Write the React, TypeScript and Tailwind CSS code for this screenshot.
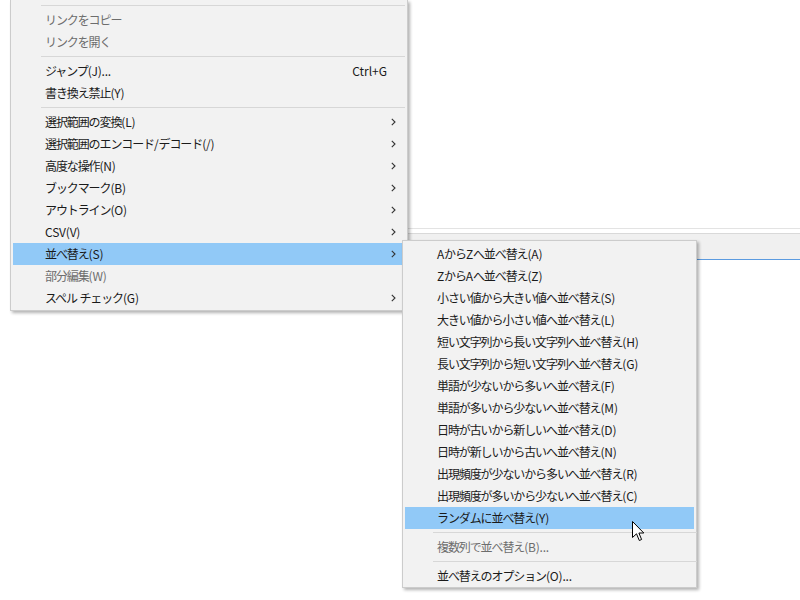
import React from "react";

type Entry =
  | { kind: "sep" }
  | { kind: "item"; label: string; shortcut?: string; sub?: boolean; disabled?: boolean; active?: boolean };

const sep: Entry = { kind: "sep" };

const mainMenu: Entry[] = [
  sep,
  { kind: "item", label: "リンクをコピー", disabled: true },
  { kind: "item", label: "リンクを開く", disabled: true },
  sep,
  { kind: "item", label: "ジャンプ(J)...", shortcut: "Ctrl+G" },
  { kind: "item", label: "書き換え禁止(Y)" },
  sep,
  { kind: "item", label: "選択範囲の変換(L)", sub: true },
  { kind: "item", label: "選択範囲のエンコード/デコード(/)", sub: true },
  { kind: "item", label: "高度な操作(N)", sub: true },
  { kind: "item", label: "ブックマーク(B)", sub: true },
  { kind: "item", label: "アウトライン(O)", sub: true },
  { kind: "item", label: "CSV(V)", sub: true },
  { kind: "item", label: "並べ替え(S)", sub: true, active: true },
  { kind: "item", label: "部分編集(W)", disabled: true },
  { kind: "item", label: "スペル チェック(G)", sub: true },
];

const sortMenu: Entry[] = [
  { kind: "item", label: "AからZへ並べ替え(A)" },
  { kind: "item", label: "ZからAへ並べ替え(Z)" },
  { kind: "item", label: "小さい値から大きい値へ並べ替え(S)" },
  { kind: "item", label: "大きい値から小さい値へ並べ替え(L)" },
  { kind: "item", label: "短い文字列から長い文字列へ並べ替え(H)" },
  { kind: "item", label: "長い文字列から短い文字列へ並べ替え(G)" },
  { kind: "item", label: "単語が少ないから多いへ並べ替え(F)" },
  { kind: "item", label: "単語が多いから少ないへ並べ替え(M)" },
  { kind: "item", label: "日時が古いから新しいへ並べ替え(D)" },
  { kind: "item", label: "日時が新しいから古いへ並べ替え(N)" },
  { kind: "item", label: "出現頻度が少ないから多いへ並べ替え(R)" },
  { kind: "item", label: "出現頻度が多いから少ないへ並べ替え(C)" },
  { kind: "item", label: "ランダムに並べ替え(Y)", active: true },
  sep,
  { kind: "item", label: "複数列で並べ替え(B)...", disabled: true },
  sep,
  { kind: "item", label: "並べ替えのオプション(O)..." },
];

// latin runs keep near-normal spacing, japanese runs are tightened (Meiryo UI kana are narrow)
function Label({ text }: { text: string }) {
  const parts = text.split(/([A-Za-z0-9()/.+ ]+)/).filter(Boolean);
  return (
    <span className="flex-1 whitespace-pre">
      {parts.map((p, i) =>
        /^[A-Za-z0-9()/.+ ]+$/.test(p) ? (
          <span key={i} className="tracking-[-0.2px]">{p}</span>
        ) : (
          <span key={i} className="tracking-[-1.1px]">{p}</span>
        )
      )}
    </span>
  );
}

function Chevron() {
  return (
    <svg width="5" height="8" viewBox="0 0 5 8" className="block">
      <path d="M0.8 0.8 L4 4 L0.8 7.2" fill="none" stroke="#333" strokeWidth="1.1" />
    </svg>
  );
}

function MenuList({ entries }: { entries: Entry[] }) {
  return (
    <>
      {entries.map((e, i) =>
        e.kind === "sep" ? (
          <div key={i} className="h-[7px] pt-[3px] pl-[28px] mr-[-3px]">
            <div className="h-px bg-[#d7d7d7]" />
          </div>
        ) : (
          <div
            key={i}
            className={`flex items-center h-[22px] leading-[22px] pl-[32px] ${
              e.active ? "bg-[#91c9f7]" : ""
            } ${e.disabled ? "text-[#6d6d6d]" : "text-[#1a1a1a]"}`}
          >
            <Label text={e.label} />
            {e.shortcut && <span className="whitespace-nowrap">{e.shortcut}</span>}
            <div className="w-[15px] pl-[4px] flex items-center h-full">{e.sub && <Chevron />}</div>
          </div>
        )
      )}
    </>
  );
}

export default function App() {
  return (
    <div className="relative w-[800px] h-[600px] overflow-hidden bg-white font-['Noto_Sans_CJK_JP','Noto_Sans',sans-serif] text-[12px]">
      {/* window behind the menus */}
      <div className="ml-[300px] flex flex-col">
        <div className="h-[228px]" />
        <div className="h-px bg-[#e3e3e3]" />
        <div className="h-[4px]" />
        <div className="h-px bg-[#d9d9d9]" />
        <div className="h-[25px] bg-[#f0f0f0]" />
        <div className="h-px bg-[#5b9be0]" />
      </div>

      {/* context menu */}
      <div className="absolute left-[10px] top-0 w-[398px] bg-[#f2f2f2] border-x border-b border-[#cccccc] pt-[2px] pl-[2px] pr-[5px] pb-[1px] shadow-[2px_2px_3px_rgba(0,0,0,0.3)]">
        <MenuList entries={mainMenu} />
      </div>

      {/* sort submenu */}
      <div className="absolute left-[402px] top-[240px] w-[295px] bg-[#f2f2f2] border border-[#cccccc] pt-[2px] px-[2px] pb-0 shadow-[2px_2px_3px_rgba(0,0,0,0.3)]">
        <MenuList entries={sortMenu} />
      </div>

      {/* mouse pointer */}
      <svg width="13" height="21" viewBox="0 0 13 21" className="absolute left-[632px] top-[521px]">
        <path d="M0.5 0.5 L0.5 16.5 L4.5 12.8 L7.3 19.5 L9.6 18.5 L6.9 12 L11.8 12 Z" fill="white" stroke="black" strokeWidth="1" />
      </svg>
    </div>
  );
}
